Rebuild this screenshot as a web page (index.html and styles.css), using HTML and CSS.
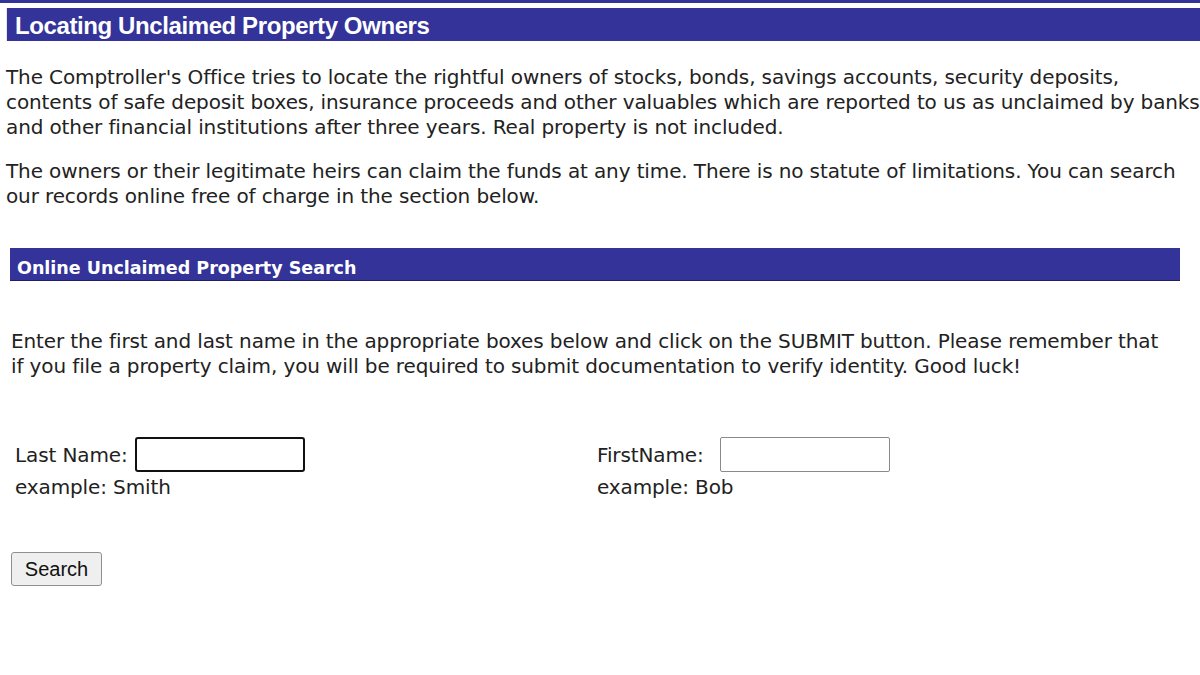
FILE: index.html
```html
<!DOCTYPE html>
<html lang="en">
<head>
<meta charset="utf-8">
<title>Locating Unclaimed Property Owners</title>
<link rel="stylesheet" href="styles.css">
</head>
<body>
<div class="topline"></div>
<h1 class="title">Locating Unclaimed Property Owners</h1>
<div class="intro">
<p>The Comptroller's Office tries to locate the rightful owners of stocks, bonds, savings accounts, security deposits, contents of safe deposit boxes, insurance proceeds and other valuables which are reported to us as unclaimed by banks and other financial institutions after three years. Real property is not included.</p>
<p>The owners or their legitimate heirs can claim the funds at any time. There is no statute of limitations. You can search our records online free of charge in the section below.</p>
</div>
<h2 class="section">Online Unclaimed Property Search</h2>
<p class="instructions">Enter the first and last name in the appropriate boxes below and click on the SUBMIT button. Please remember that if you file a property claim, you will be required to submit documentation to verify identity. Good luck!</p>
<form class="search">
<div class="fields">
<div class="field">
<label class="row">Last Name: <input type="text" class="box focused"></label>
<div class="example">example: Smith</div>
</div>
<div class="field">
<label class="row wide">FirstName: <input type="text" class="box"></label>
<div class="example">example: Bob</div>
</div>
</div>
<button type="button" class="btn">Search</button>
</form>
</body>
</html>
```
FILE: styles.css
```css
html, body {
  margin: 0;
  padding: 0;
  background: #fff;
}
body {
  font-family: "DejaVu Sans", Verdana, sans-serif;
  color: #222;
  font-size: 20px;
  letter-spacing: -0.12px;
  width: 1200px;
  overflow: hidden;
}
.topline {
  height: 3px;
  background: #333399;
  margin-bottom: 5px;
}
.title {
  margin: 0 0 0 6px;
  border-left: 1px solid #e4e4f0;
  background: #333399;
  color: #fff;
  font-family: "Liberation Sans", Arial, sans-serif;
  font-weight: bold;
  font-size: 24px;
  letter-spacing: -0.4px;
  height: 33px;
  line-height: 35px;
  padding-left: 8px;
}
.intro {
  padding: 0 0 0 6px;
  margin-top: 24px;
}
.intro p {
  margin: 0 0 19px 0;
  line-height: 25px;
}
.section {
  margin: 39px 20px 0 10px;
  background: #333399;
  color: #fff;
  font-family: "DejaVu Sans", Verdana, sans-serif;
  font-weight: bold;
  font-size: 17.5px;
  letter-spacing: 0;
  height: 33px;
  line-height: 40px;
  padding-left: 7px;
  border-bottom: 1px solid #1f1f66;
  box-sizing: border-box;
}
.instructions {
  margin: 48px 32px 0 11px;
  line-height: 25px;
}
.search {
  margin: 58px 0 0 11px;
}
.fields {
  display: grid;
  grid-template-columns: 582px 1fr;
}
.field {
  padding-left: 4px;
}
.row {
  display: flex;
  align-items: center;
  gap: 8px;
}
.row.wide {
  gap: 16px;
}
.box {
  width: 170px;
  height: 35px;
  box-sizing: border-box;
  border: 1px solid #8a8a8a;
  border-radius: 2px;
  margin: 0;
  padding: 0;
  background: #fff;
}
.box.focused {
  border: 2px solid #111;
  border-radius: 3px;
  margin-left: -1px;
}
.example {
  line-height: 30px;
}
.btn {
  margin-top: 50px;
  width: 91px;
  height: 34px;
  font-family: "Liberation Sans", Arial, sans-serif;
  font-size: 20px;
  letter-spacing: 0;
  color: #111;
  background: #efefef;
  border: 1px solid #8f8f8f;
  border-radius: 3px;
  padding: 0;
}
```
